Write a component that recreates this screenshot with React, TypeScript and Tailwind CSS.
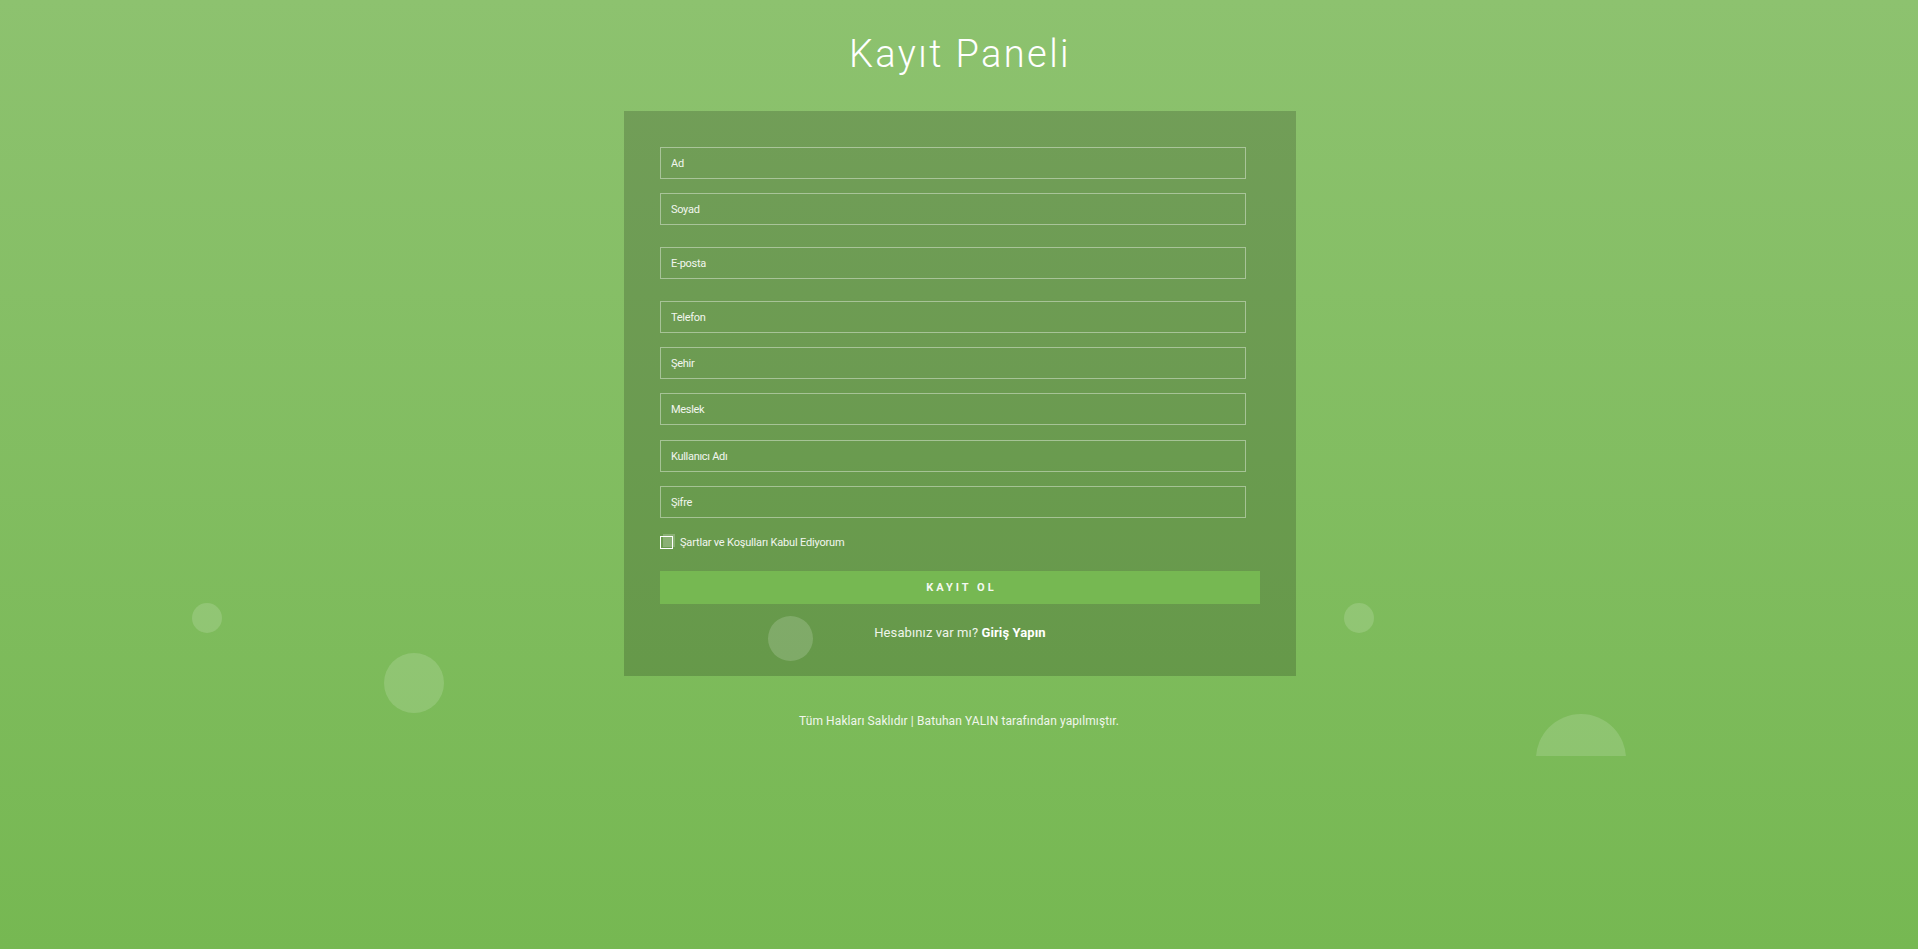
import React from "react";

const fields: { label: string; mt: string; type: string }[] = [
  { label: "Ad", mt: "mt-0", type: "text" },
  { label: "Soyad", mt: "mt-[14px]", type: "text" },
  { label: "E-posta", mt: "mt-[22px]", type: "email" },
  { label: "Telefon", mt: "mt-[22px]", type: "tel" },
  { label: "Şehir", mt: "mt-[14px]", type: "text" },
  { label: "Meslek", mt: "mt-[14px]", type: "text" },
  { label: "Kullanıcı Adı", mt: "mt-[15px]", type: "text" },
  { label: "Şifre", mt: "mt-[14px]", type: "password" },
];

export default function App() {
  return (
    <div
      className="relative min-h-[949px] w-full overflow-hidden bg-[linear-gradient(to_bottom,#8dc26f,#76b852)]"
      style={{ fontFamily: "Roboto, 'Noto Sans', sans-serif" }}
    >
      <div className="relative z-[2] flex flex-col items-center pt-[32px]">
        <h1 className="pl-[2px] text-[38px] font-light leading-[44px] tracking-[2.4px] text-white">
          Kayıt Paneli
        </h1>

        <div className="ml-[2px] mt-[35px] h-[565px] w-[672px] bg-[rgba(0,0,0,0.18)] pl-[36px] pt-[36px]">
          {fields.map((f) => (
            <div key={f.label} className={f.mt}>
              <input
                type={f.type === "password" ? "text" : f.type}
                placeholder={f.label}
                className="block h-[32px] w-[586px] border border-[rgba(255,255,255,0.4)] bg-transparent pl-[10px] text-[11px] tracking-[-0.3px] text-white outline-none placeholder:text-[#f2f6ef]"
              />
            </div>
          ))}

          <label className="mt-[18px] flex h-[13px] items-center">
            <span className="relative block h-[13px] w-[13px]">
              <span className="absolute left-[3px] top-[-2.5px] block h-[13px] w-[12px] bg-[rgba(255,255,255,0.22)]" />
              <span className="absolute inset-0 block border border-white" />
            </span>
            <span className="ml-[7px] text-[11px] leading-[13px] tracking-[-0.18px] text-[#f2f6ef]">
              Şartlar ve Koşulları Kabul Ediyorum
            </span>
          </label>

          <button className="mt-[22px] flex h-[33px] w-[600px] items-center justify-center bg-[#76b852] pl-[3px] pt-[2px] text-[11px] font-bold tracking-[3px] text-[#f4f8f1]">
            KAYIT OL
          </button>

          <p className="mt-[21px] w-[600px] text-center text-[13px] leading-[16px] tracking-[0.1px] text-[#eef4ea]">
            Hesabınız var mı? <span className="font-bold text-white">Giriş Yapın</span>
          </p>
        </div>

        <p className="mt-[38px] text-[12px] leading-[14px] tracking-[0.1px] text-[#f0f6ec]">
          Tüm Hakları Saklıdır | Batuhan YALIN tarafından yapılmıştır.
        </p>
      </div>

      <div className="pointer-events-none absolute left-0 top-0 z-[3] h-[756px] w-full overflow-hidden">
        <span className="absolute left-[192px] top-[603px] block h-[30px] w-[30px] rounded-full bg-[rgba(255,255,255,0.15)]" />
        <span className="absolute left-[384px] top-[653px] block h-[60px] w-[60px] rounded-full bg-[rgba(255,255,255,0.15)]" />
        <span className="absolute left-[768px] top-[616px] block h-[45px] w-[45px] rounded-full bg-[rgba(255,255,255,0.17)]" />
        <span className="absolute left-[1344px] top-[603px] block h-[30px] w-[30px] rounded-full bg-[rgba(255,255,255,0.15)]" />
        <span className="absolute left-[1536px] top-[714px] block h-[90px] w-[90px] rounded-full bg-[rgba(255,255,255,0.15)]" />
      </div>
    </div>
  );
}
